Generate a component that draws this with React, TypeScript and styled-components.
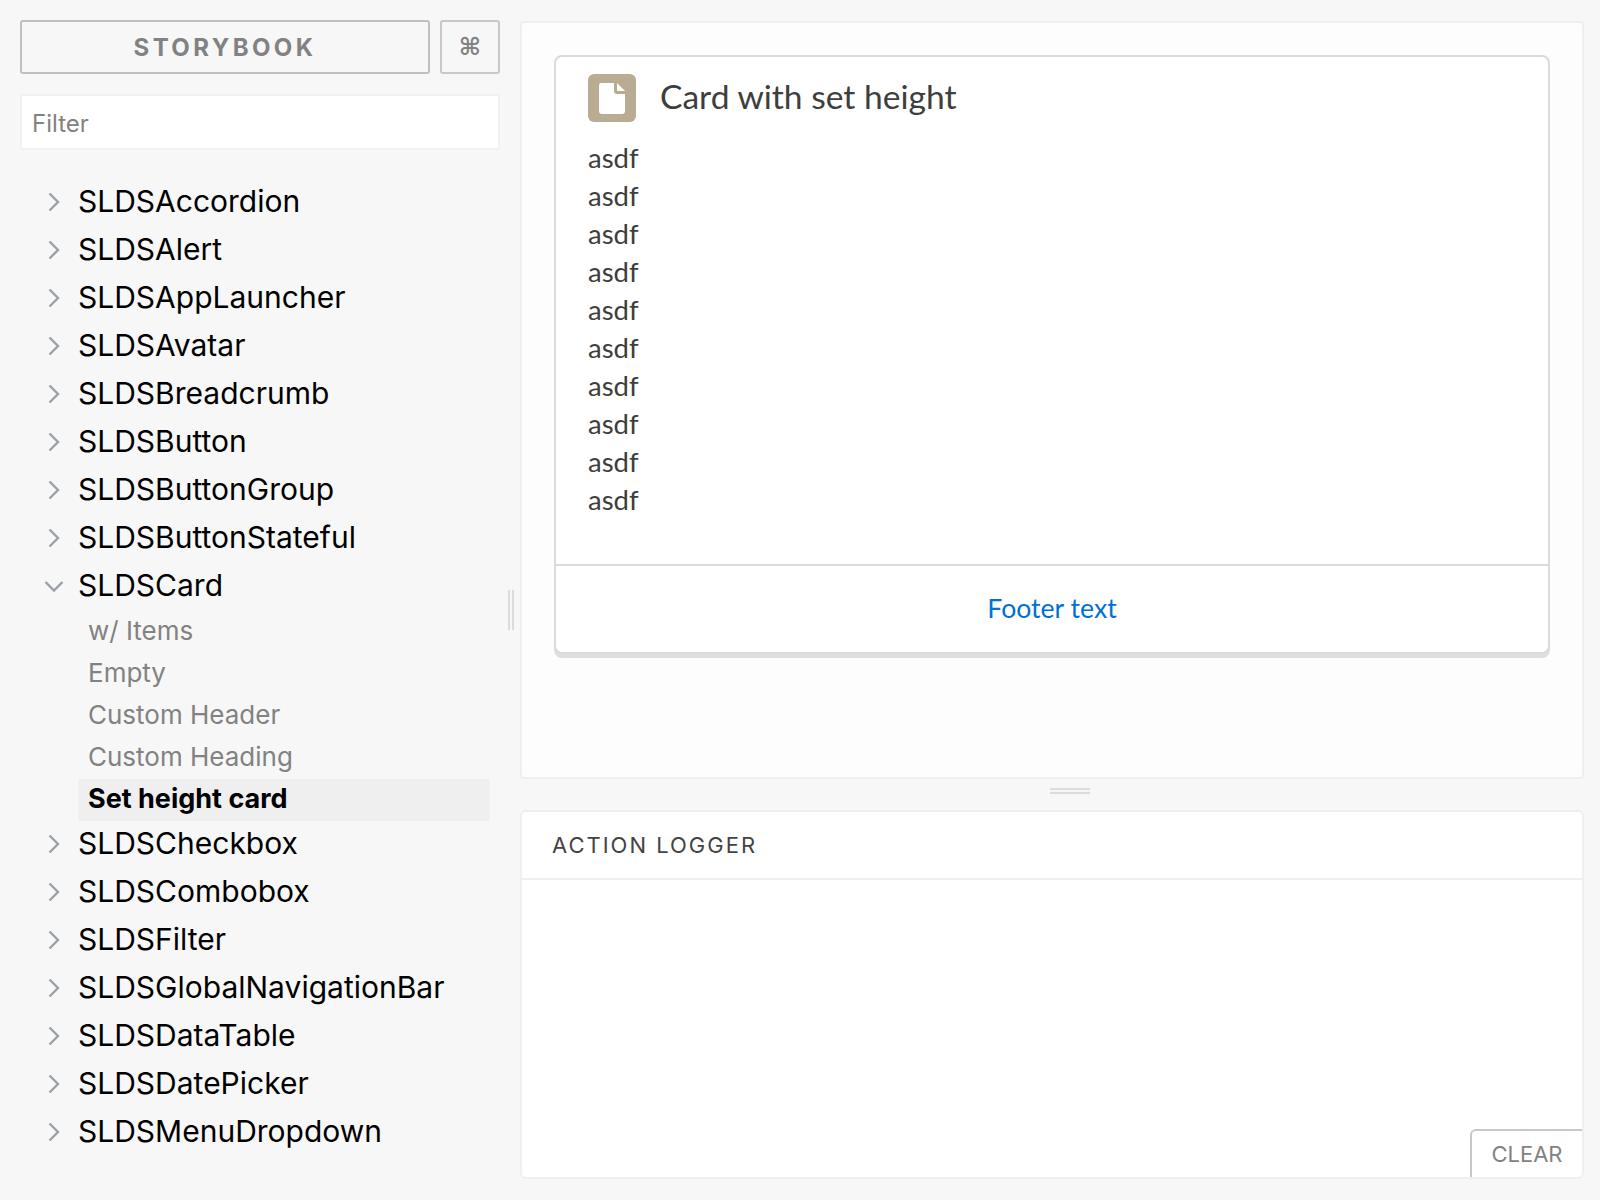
import * as React from 'react';
import styled, { createGlobalStyle } from 'styled-components';

const GlobalStyle = createGlobalStyle`
    html, body {
        margin: 0;
        padding: 0;
        background: #f7f7f7;
    }
    * {
        box-sizing: border-box;
    }
`;

const before = ['SLDSAccordion', 'SLDSAlert', 'SLDSAppLauncher', 'SLDSAvatar', 'SLDSBreadcrumb', 'SLDSButton', 'SLDSButtonGroup', 'SLDSButtonStateful'];
const after = ['SLDSCheckbox', 'SLDSCombobox', 'SLDSFilter', 'SLDSGlobalNavigationBar', 'SLDSDataTable', 'SLDSDatePicker', 'SLDSMenuDropdown'];
const stories = ['w/ Items', 'Empty', 'Custom Header', 'Custom Heading'];
const lines = Array.from({ length: 10 }, () => 'asdf');

const Chevron: React.FC<{ open?: boolean }> = ({ open }) => (
    <ChevronBox>
        <svg width="20" height="20" viewBox="0 0 20 20" fill="none" stroke="#9aa1a8" strokeWidth="2.4">
            {open ? <path d="M1.5 6 L10 14.5 L18.5 6" /> : <path d="M5.5 1.5 L14 10 L5.5 18.5" />}
        </svg>
    </ChevronBox>
);

const App: React.FC = () => {
    return (
        <Page>
            <GlobalStyle />
            <Sidebar>
                <TopRow>
                    <BrandButton>STORYBOOK</BrandButton>
                    <ShortcutButton>⌘</ShortcutButton>
                </TopRow>
                <FilterBox>Filter</FilterBox>
                <Tree>
                    {before.map((name) => (
                        <TreeRow key={name}>
                            <Chevron />
                            {name}
                        </TreeRow>
                    ))}
                    <TreeRow>
                        <Chevron open={true} />
                        SLDSCard
                    </TreeRow>
                    <StoryList>
                        {stories.map((name) => (
                            <Story key={name}>{name}</Story>
                        ))}
                        <ActiveStory>Set height card</ActiveStory>
                    </StoryList>
                    {after.map((name) => (
                        <TreeRow key={name}>
                            <Chevron />
                            {name}
                        </TreeRow>
                    ))}
                </Tree>
                <VerticalHandle />
            </Sidebar>
            <Main>
                <Preview>
                    <Card>
                        <CardHeader>
                            <CardIcon>
                                <svg width="26" height="31" viewBox="0 0 26 31">
                                    <path d="M2 0 H15 V8 A3 3 0 0 0 18 11 H26 V28 A3 3 0 0 1 23 31 H3 A3 3 0 0 1 0 28 V2 A2 2 0 0 1 2 0 Z" fill="#fff" />
                                    <path d="M18 0 L26 8 H19.5 A1.5 1.5 0 0 1 18 6.5 Z" fill="#fff" />
                                </svg>
                            </CardIcon>
                            <CardTitle>Card with set height</CardTitle>
                        </CardHeader>
                        <CardBody>
                            {lines.map((line, i) => (
                                <BodyLine key={i}>{line}</BodyLine>
                            ))}
                        </CardBody>
                        <CardFooter>Footer text</CardFooter>
                    </Card>
                </Preview>
                <HorizontalHandle />
                <Logger>
                    <LoggerTitle>ACTION LOGGER</LoggerTitle>
                    <ClearButton>CLEAR</ClearButton>
                </Logger>
            </Main>
        </Page>
    );
};

const Page = styled.div`
    display: flex;
    width: 1600px;
    height: 1200px;
    overflow: hidden;
    background: #f7f7f7;
    font-family: Inter, 'Liberation Sans', sans-serif;
`;

const Sidebar = styled.div`
    position: relative;
    width: 520px;
    flex: none;
    padding: 20px 20px 0 20px;
`;

const TopRow = styled.div`
    display: flex;
    gap: 10px;
    height: 54px;
`;

const BrandButton = styled.div`
    flex: 1;
    display: flex;
    align-items: center;
    justify-content: center;
    border: 2px solid #c0c0c0;
    border-radius: 3px;
    color: #828282;
    font-size: 24px;
    font-weight: 700;
    letter-spacing: 3.4px;
`;

const ShortcutButton = styled.div`
    width: 60px;
    display: flex;
    align-items: center;
    justify-content: center;
    border: 2px solid #c8c8c8;
    border-radius: 3px;
    color: #828282;
    font-family: 'DejaVu Sans', sans-serif;
    font-size: 24px;
    font-weight: 700;
`;

const FilterBox = styled.div`
    height: 56px;
    margin-top: 20px;
    padding: 2px 0 0 10px;
    display: flex;
    align-items: center;
    background: #fff;
    border: 2px solid #f1f1f1;
    border-radius: 2px;
    color: #828282;
    font-size: 24px;
`;

const Tree = styled.div`
    margin-top: 27px;
`;

const TreeRow = styled.div`
    display: flex;
    align-items: center;
    height: 48px;
    color: #000;
    font-size: 30px;
    line-height: 48px;
`;

const ChevronBox = styled.span`
    width: 58px;
    padding: 2px 0 0 24px;
    display: flex;
    flex: none;
`;

const StoryList = styled.div`
    margin-left: 58px;
    width: 412px;
`;

const Story = styled.div`
    height: 42px;
    padding-left: 10px;
    display: flex;
    align-items: center;
    color: #828282;
    font-size: 26px;
`;

const ActiveStory = styled(Story)`
    margin: 2px 0 -2px;
    padding-bottom: 3px;
    background: #efefef;
    color: #000;
    font-size: 27px;
    font-weight: 700;
`;

const VerticalHandle = styled.div`
    position: absolute;
    left: 508px;
    top: 590px;
    width: 6px;
    height: 40px;
    border-left: 2px solid #dcdcdc;
    border-right: 2px solid #dcdcdc;
`;

const Main = styled.div`
    flex: 1;
    position: relative;
    display: flex;
    flex-direction: column;
    padding: 21px 16px 21px 0;
`;

const Preview = styled.div`
    height: 758px;
    padding: 32px;
    background: #fdfdfd;
    border: 2px solid #efefef;
    border-radius: 4px;
`;

const Card = styled.div`
    height: 599px;
    display: flex;
    flex-direction: column;
    background: #fff;
    border: 2px solid #dbdbdb;
    border-radius: 8px;
    box-shadow: 0 4px 0 #dedede;
`;

const CardHeader = styled.div`
    display: flex;
    align-items: center;
    gap: 24px;
    padding: 17px 32px 0;
`;

const CardIcon = styled.div`
    width: 48px;
    height: 48px;
    flex: none;
    display: flex;
    align-items: center;
    justify-content: center;
    background: #baac93;
    border-radius: 6px;
`;

const CardTitle = styled.div`
    margin-top: -4px;
    color: #3e3e3c;
    font-family: Lato, 'Liberation Sans', sans-serif;
    font-size: 33.6px;
`;

const CardBody = styled.div`
    flex: 1;
    padding: 17px 32px 0;
`;

const BodyLine = styled.div`
    height: 38px;
    line-height: 38px;
    color: #3e3e3c;
    font-family: Lato, 'Liberation Sans', sans-serif;
    font-size: 27.5px;
`;

const CardFooter = styled.div`
    height: 88px;
    padding-bottom: 2px;
    display: flex;
    align-items: center;
    justify-content: center;
    border-top: 2px solid #dbdbdb;
    color: #0070d2;
    font-family: Lato, 'Liberation Sans', sans-serif;
    font-size: 26.6px;
`;

const HorizontalHandle = styled.div`
    position: absolute;
    left: 530px;
    top: 788px;
    width: 40px;
    height: 6px;
    border-top: 2px solid #dcdcdc;
    border-bottom: 2px solid #dcdcdc;
`;

const Logger = styled.div`
    position: relative;
    margin-top: 31px;
    flex: 1;
    background: #fff;
    border: 2px solid #efefef;
    border-radius: 6px;
    overflow: hidden;
`;

const LoggerTitle = styled.div`
    height: 68px;
    padding-left: 30px;
    display: flex;
    align-items: center;
    border-bottom: 2px solid #efefef;
    color: #444;
    font-size: 22px;
    letter-spacing: 2px;
`;

const ClearButton = styled.div`
    position: absolute;
    right: 0;
    bottom: 0;
    width: 112px;
    height: 48px;
    padding-bottom: 1px;
    display: flex;
    align-items: center;
    justify-content: center;
    border-top: 2px solid #c8c8c8;
    border-left: 2px solid #c8c8c8;
    border-top-left-radius: 6px;
    color: #828282;
    font-size: 22px;
`;

export default App;
